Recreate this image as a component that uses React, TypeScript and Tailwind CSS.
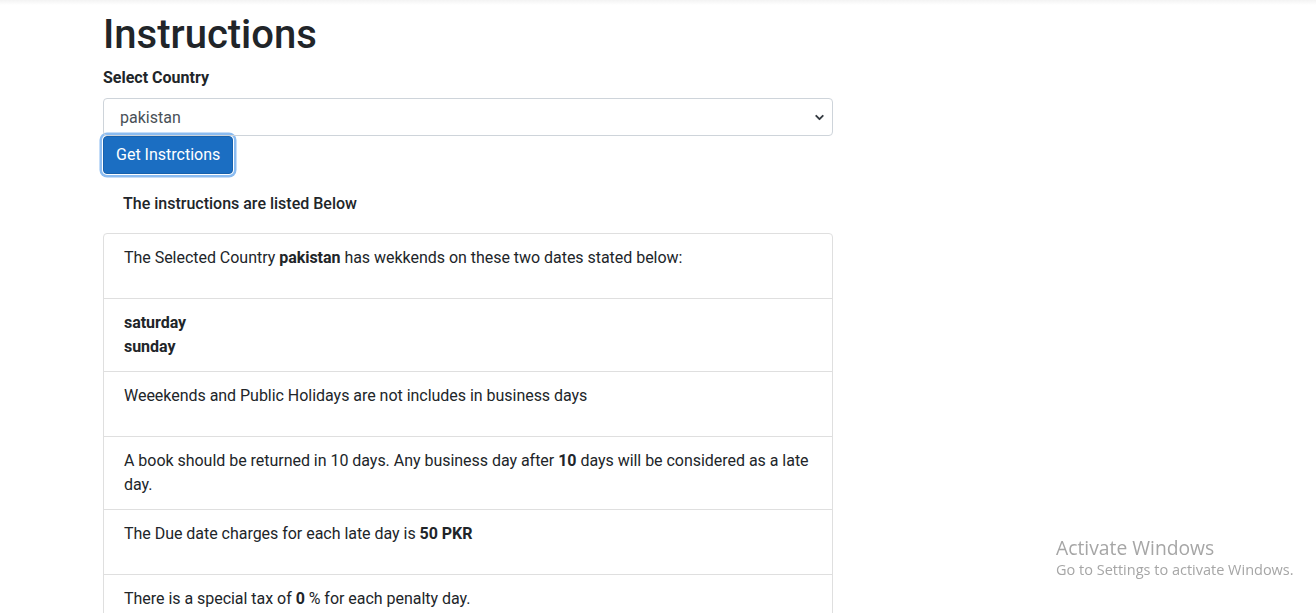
import { ChevronDown } from 'lucide-react'

const font = { fontFamily: 'Roboto, "Liberation Sans", sans-serif' }

export default function App() {
  return (
    <div className="min-h-[613px] bg-white text-[#212529] text-[16px] leading-6" style={font}>
      {/* faint top edge */}
      <div className="h-[5px] bg-gradient-to-b from-[#f3f3f3] to-white" />

      <div className="pl-[103px] w-[833px]">
        <h1 className="text-[40px] leading-[48px] font-medium mt-[6px] mb-[7px]">Instructions</h1>

        <label className="block font-bold mb-[8px]">Select Country</label>

        <div className="relative h-[38px] border border-[#ced4da] rounded-[4px] flex items-center pl-4 pt-[1px] text-[#495057]">
          pakistan
          <ChevronDown className="absolute right-[6px] top-[12px] w-[13px] h-[13px] text-[#343a40]" strokeWidth={3.5} />
        </div>

        <button className="h-[38px] px-3 rounded-[4px] bg-[#1b6ec2] border border-[#1861ac] text-white shadow-[0_0_0_1px_#fff,0_0_0_3.5px_#8bbcf1]">
          Get Instrctions
        </button>

        <p className="font-medium px-5 mt-[18px] mb-[17px]">The instructions are listed Below</p>

        <ul className="border border-[#dfdfdf] rounded-t-[4px] tracking-[-0.03px]">
          <li className="px-5 pt-3 pb-[28px] border-b border-[#dfdfdf]">
            The Selected Country <b>pakistan</b> has wekkends on these two dates stated below:
          </li>
          <li className="px-5 py-3 border-b border-[#dfdfdf] font-bold">
            <div>saturday</div>
            <div>sunday</div>
          </li>
          <li className="px-5 pt-3 pb-[28px] border-b border-[#dfdfdf]">
            Weeekends and Public Holidays are not includes in business days
          </li>
          <li className="px-5 py-3 border-b border-[#dfdfdf]">
            A book should be returned in 10 days. Any business day after <b>10</b> days will be considered as a late day.
          </li>
          <li className="px-5 pt-3 pb-[28px] border-b border-[#dfdfdf]">
            The Due date charges for each late day is <b>50 PKR</b>
          </li>
          <li className="px-5 pt-3 pb-[28px] border-b border-[#dfdfdf]">
            There is a special tax of <b>0</b> % for each penalty day.
          </li>
        </ul>
      </div>

      <div
        className="fixed left-[1056px] top-[536px] text-[#a6a6a6] pointer-events-none"
        style={{ fontFamily: '"Open Sans", "Noto Sans", sans-serif' }}
      >
        <div className="text-[19.3px] leading-[24px]">Activate Windows</div>
        <div className="text-[14.5px] leading-[20px]">Go to Settings to activate Windows.</div>
      </div>
    </div>
  )
}
